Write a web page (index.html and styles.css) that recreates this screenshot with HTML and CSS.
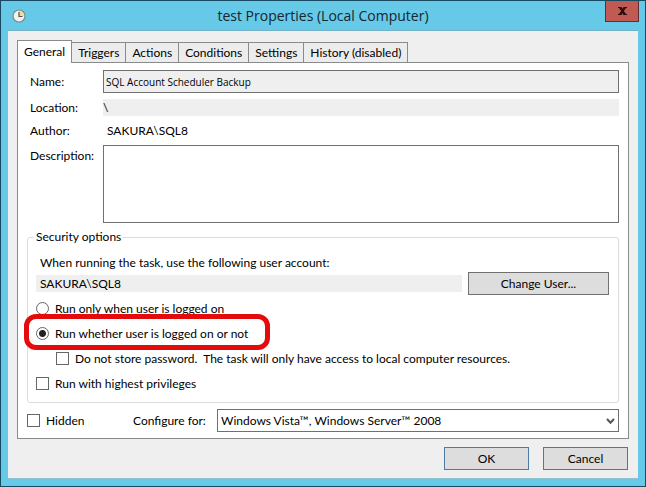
FILE: index.html
```
<!DOCTYPE html>
<html lang="en">
<head>
  <meta charset="UTF-8">
  <meta name="viewport" content="width=device-width, initial-scale=1.0">
  <title>test Properties (Local Computer)</title>
  <link rel="stylesheet" href="styles.css">
</head>
<body>
  <div class="window">
    <header class="titlebar">
      <svg class="app-icon" width="14" height="14" viewBox="0 0 14 14">
        <circle cx="7" cy="7" r="6" fill="#f3f3ee" stroke="#7d8b8f" stroke-width="1.2"/>
        <path d="M7 7V2a5 5 0 0 1 5 5z" fill="#f2dc93"/>
        <path d="M7 3v4.500h3.500" fill="none" stroke="#4c5255" stroke-width="1.200"/>
      </svg>
      <h1>test Properties (Local Computer)</h1>
      <button class="close" type="button" aria-label="Close">
        <svg width="9" height="8" viewBox="0 0 9 8">
          <path d="M0 0H3.500L4.500 1.800L5.500 0H9V1H8L5.800 4L8 7H9V8H5.500L4.500 6.200L3.500 8H0V7H1L3.200 4L1 1H0z" fill="#2b0d0c"/>
        </svg>
      </button>
    </header>

    <form class="client">
      <nav class="tabs">
        <button class="tab active" type="button">General</button>
        <button class="tab" type="button">Triggers</button>
        <button class="tab" type="button">Actions</button>
        <button class="tab" type="button">Conditions</button>
        <button class="tab" type="button">Settings</button>
        <button class="tab" type="button">History (disabled)</button>
      </nav>

      <div class="panel">
        <div class="fields">
          <label for="name">Name:</label>
          <input class="name" id="name" type="text" value="SQL Account Scheduler Backup" readonly>
          <label for="location">Location:</label>
          <input class="readonly" id="location" type="text" value="\" readonly>
          <span>Author:</span>
          <span class="author">SAKURA\SQL8</span>
          <label for="description">Description:</label>
          <textarea id="description"></textarea>
        </div>

        <fieldset class="security">
          <legend>Security options</legend>
          <label class="hint" for="account">When running the task, use the following user account:</label>
          <div class="account">
            <input class="readonly" id="account" type="text" value="SAKURA\SQL8" readonly>
            <button class="btn" type="button">Change User...</button>
          </div>
          <label class="option"><input type="radio" name="logon"> Run only when user is logged on</label>
          <label class="option highlight"><input type="radio" name="logon" checked> Run whether user is logged on or not</label>
          <label class="option nested"><input type="checkbox"> Do not store password.&nbsp; The task will only have access to local computer resources.</label>
          <label class="option"><input type="checkbox"> Run with highest privileges</label>
        </fieldset>

        <div class="bottom">
          <label class="option hidden-task"><input type="checkbox"> Hidden</label>
          <label class="configure" for="configure">Configure for:</label>
          <div class="select">
            <select id="configure">
              <option>Windows Vista™, Windows Server™ 2008</option>
            </select>
            <svg width="9" height="7" viewBox="0 0 9 7">
              <path d="M1 1L4.500 4.800L8 1" fill="none" stroke="#555" stroke-width="2"/>
            </svg>
          </div>
        </div>
      </div>

      <footer class="actions">
        <button class="btn default" type="button">OK</button>
        <button class="btn" type="button">Cancel</button>
      </footer>
    </form>
  </div>
</body>
</html>
```
FILE: styles.css
```
* {
  box-sizing: border-box;
}
body {
  margin: 0;
  font-family: Lato, "Open Sans", sans-serif;
  font-size: 12px;
  line-height: 17px;
  color: #000;
}
input, button, select, textarea {
  margin: 0;
  font: inherit;
  color: inherit;
}
.window {
  display: flex;
  flex-direction: column;
  min-height: 100vh;
  padding: 0 7px 7px;
  border: 1px solid #174a60;
  background: #67c9e8;
}

/* title bar */
.titlebar {
  display: grid;
  grid-template-columns: 36px 1fr 36px;
  height: 29px;
}
.app-icon {
  margin: 8px 0 0 4px;
}
h1 {
  margin: 0;
  font-family: "Open Sans", "Noto Sans", sans-serif;
  font-size: 14px;
  font-weight: normal;
  line-height: 30px;
  text-align: center;
  color: #14262e;
}
.close {
  display: flex;
  align-items: center;
  justify-content: center;
  justify-self: end;
  width: 34px;
  height: 21px;
  margin-right: -1px;
  padding: 0;
  border: 1px solid #5a2f35;
  border-top: none;
  background: #c15a52;
}

.client {
  display: flex;
  flex: 1;
  flex-direction: column;
  padding: 9px 9px 0;
  border-top: 1px solid #74afc4;
  border-bottom: 1px solid #8fc3d3;
  background: #efefef;
}

/* tabs */
.tabs {
  display: flex;
  align-items: flex-end;
}
.tab {
  height: 20px;
  padding: 0 6px;
  border: 1px solid #888a8c;
  border-bottom: none;
  background: #ececec;
  line-height: 19px;
}
.tab + .tab {
  border-left: none;
}
.tab.active {
  position: relative;
  height: 23px;
  margin-bottom: -1px;
  padding: 0 6px 2px;
  background: #fff;
}

/* general page */
.panel {
  padding: 7px 9px 6px;
  border: 1px solid #888a8c;
  background: #fff;
}
.fields {
  display: grid;
  grid-template-columns: 73px 1fr;
  gap: 6px 0;
  align-items: center;
  margin-left: 3px;
}
.name {
  height: 23px;
  padding: 0 2px;
  border: 1px solid #707070;
  background: #efefef;
  font-family: "Open Sans", "Noto Sans", sans-serif;
  font-size: 10px;
}
.readonly {
  height: 17px;
  padding: 0;
  border: none;
  background: #efefef;
}
.author {
  padding-left: 4px;
}
textarea {
  height: 78px;
  border: 1px solid #707070;
  background: #fff;
  resize: none;
}
.fields label[for="description"] {
  align-self: start;
  padding-top: 2px;
}

/* security options */
.security {
  min-width: 0;
  margin: 5px 0 0;
  padding: 0 9px 6px 8px;
  border: 1px solid #dcdcdc;
  border-radius: 3px;
}
legend {
  height: 18px;
  margin-left: -2px;
  padding: 0 2px;
}
.hint {
  display: block;
  margin-top: 8px;
  padding-left: 4px;
}
.account {
  display: flex;
  gap: 6px;
  align-items: center;
  margin: 1px 0;
}
.account .readonly {
  flex: 1;
  min-width: 0;
  padding-left: 4px;
}
.account .btn {
  width: 141px;
}
.option {
  display: flex;
  gap: 6px;
  align-items: center;
  height: 25px;
}
.nested {
  margin-left: 20px;
}
.highlight {
  position: relative;
  width: fit-content;
}
.highlight::after {
  content: "";
  position: absolute;
  inset: -7px -22px -4px -12px;
  border: 5px solid #e30b0b;
  border-radius: 12px;
}
input[type="radio"], input[type="checkbox"] {
  appearance: none;
  width: 13px;
  height: 13px;
  border: 1px solid #666;
  background: #fff;
}
input[type="radio"] {
  border-radius: 50%;
}
input[type="radio"]:checked {
  background: radial-gradient(circle, #222 3px, #fff 4px);
}
input[type="checkbox"]:checked {
  background: #444;
}

/* last row of the page */
.bottom {
  display: flex;
  align-items: center;
  margin-top: 6px;
}
.bottom .option {
  height: 23px;
}
.hidden-task {
  width: 106px;
}
.configure {
  width: 84px;
}
.select {
  position: relative;
  flex: 1;
}
select {
  appearance: none;
  display: block;
  width: 100%;
  height: 23px;
  padding: 0 20px 0 3px;
  border: 1px solid #707070;
  border-radius: 0;
  background: #fff;
}
.select svg {
  position: absolute;
  top: 9px;
  right: 4px;
  pointer-events: none;
}

.btn {
  width: 85px;
  height: 23px;
  padding: 0;
  border: 1px solid #707070;
  background: #dddddd;
}
.btn.default {
  border-color: #4d7ba3;
}
.actions {
  display: flex;
  gap: 14px;
  justify-content: flex-end;
  padding: 8px 1px 8px;
}
```
